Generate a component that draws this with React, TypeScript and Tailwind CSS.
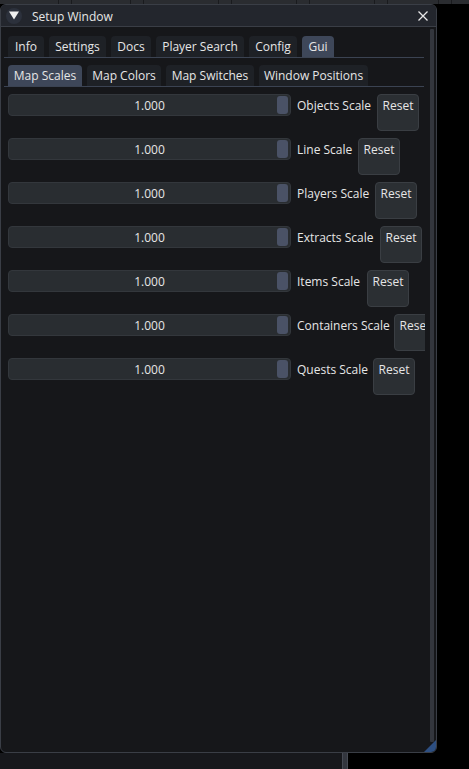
import React from "react";

const tabs1 = [
  { t: "Info", w: "w-[36px]" },
  { t: "Settings", w: "w-[57px]" },
  { t: "Docs", w: "w-[40px]" },
  { t: "Player Search", w: "w-[88px]" },
  { t: "Config", w: "w-[48px]" },
  { t: "Gui", w: "w-[32px]", active: true },
];

const tabs2 = [
  { t: "Map Scales", w: "w-[74px]", active: true },
  { t: "Map Colors", w: "w-[74px]" },
  { t: "Map Switches", w: "w-[88px]" },
  { t: "Window Positions", w: "w-[109px]" },
];

const rows = [
  { label: "Objects Scale", w: "w-[86px]" },
  { label: "Line Scale", w: "w-[67px]" },
  { label: "Players Scale", w: "w-[84px]" },
  { label: "Extracts Scale", w: "w-[89px]" },
  { label: "Items Scale", w: "w-[76px]" },
  { label: "Containers Scale", w: "w-[103px]" },
  { label: "Quests Scale", w: "w-[82px]" },
];

function TabBar({ items }: { items: { t: string; w: string; active?: boolean }[] }) {
  return (
    <div className="w-[420px] border-b border-[#3b4352]">
      <div className="flex gap-[5px] pl-[4px]">
        {items.map((it) => (
          <div
            key={it.t}
            className={`${it.w} h-[21px] pt-[1px] flex items-center justify-center rounded-t-[4px] whitespace-nowrap ${
              it.active ? "bg-[#3e4759]" : "bg-[#1e2126]"
            }`}
          >
            {it.t}
          </div>
        ))}
      </div>
    </div>
  );
}

export default function App() {
  return (
    <div
      className="relative w-[469px] h-[769px] overflow-hidden bg-black text-[12px] text-[#e6e6e6]"
      style={{ fontFamily: '"Open Sans", "Noto Sans", sans-serif' }}
    >
      {/* desktop background */}
      <div className="flex flex-col h-full">
        <div className="h-[4px] bg-[#2a2c30] flex">
          <div className="w-[58px]" />
          <div className="w-[14px] border-x border-[#1a1b1e]" />
          <div className="w-[58px]" />
          <div className="w-[14px] border-x border-[#1a1b1e]" />
          <div className="w-[74px]" />
          <div className="w-[14px] border-x border-[#1a1b1e]" />
          <div className="w-[64px]" />
          <div className="w-[14px] border-x border-[#1a1b1e]" />
          <div className="w-[64px]" />
          <div className="w-[14px] border-x border-[#1a1b1e]" />
          <div className="w-[50px]" />
          <div className="w-[14px] border-x border-[#1a1b1e]" />
        </div>
        <div className="h-[749px]" />
        <div className="flex flex-1">
          <div className="w-[342px] bg-[#17181c]" />
          <div className="w-[6px] bg-[#33363e] border-x border-[#464a53]" />
          <div className="flex-1 bg-black" />
        </div>
      </div>

      {/* window */}
      <div className="absolute left-0 top-[4px] w-[437px] h-[749px] rounded-[6px] border border-[#3a3e46] bg-[#16171a] overflow-hidden flex flex-col">
        <div className="h-[22px] shrink-0 bg-[#23262d] border-b border-[#3a3e46] flex items-center">
          <div className="ml-[5px] w-[16px] h-[16px] rounded-full bg-[#2c313c] flex items-center justify-center">
            <svg width="10" height="9" viewBox="0 0 10 9">
              <polygon points="0,0.5 10,0.5 5,8.5" fill="#f0f0f0" />
            </svg>
          </div>
          <div className="ml-[10px] pt-[2px] leading-none">Setup Window</div>
          <div className="flex-1" />
          <svg width="10" height="10" viewBox="0 0 10 10" className="mr-[8px] mt-[1px]">
            <path d="M0.5 0.5 L9.5 9.5 M9.5 0.5 L0.5 9.5" stroke="#e8e8e8" strokeWidth="1.3" />
          </svg>
        </div>

        <div className="flex flex-1 min-h-0 relative">
          <div className="w-[424px] overflow-hidden pl-[3px] pt-[9px]">
            <TabBar items={tabs1} />
            <div className="mt-[7px]">
              <TabBar items={tabs2} />
            </div>
            <div className="mt-[7px] flex flex-col gap-[7px] pl-[4px]">
              {rows.map((r) => (
                <div key={r.label} className="flex items-start h-[37px]">
                  <div className="w-[283px] h-[22px] pt-[1px] shrink-0 rounded-[4px] bg-[#292d31] border border-[#33373c] relative flex items-center justify-center">
                    <span>1.000</span>
                    <div className="absolute right-[2px] top-[1px] w-[11px] h-[18px] rounded-[3px] bg-[#4a5266]" />
                  </div>
                  <div className={`${r.w} shrink-0 pl-[6px] pt-[1px] h-[22px] flex items-center whitespace-nowrap`}>
                    {r.label}
                  </div>
                  <div className="w-[42px] h-[37px] shrink-0 rounded-[4px] bg-[#2b2f33] border border-[#3a3e43] flex justify-center pt-[2px]">
                    Reset
                  </div>
                </div>
              ))}
            </div>
          </div>
          <div className="w-[11px] shrink-0 pt-[2px] pb-[10px]">
            <div className="ml-[5px] w-[4px] h-full bg-[#33363d] rounded-[1px]" />
          </div>
          <svg width="12" height="12" viewBox="0 0 12 12" className="absolute right-0 bottom-0">
            <polygon points="12,0 12,12 0,12" fill="#2d4f82" />
          </svg>
        </div>
      </div>
    </div>
  );
}
